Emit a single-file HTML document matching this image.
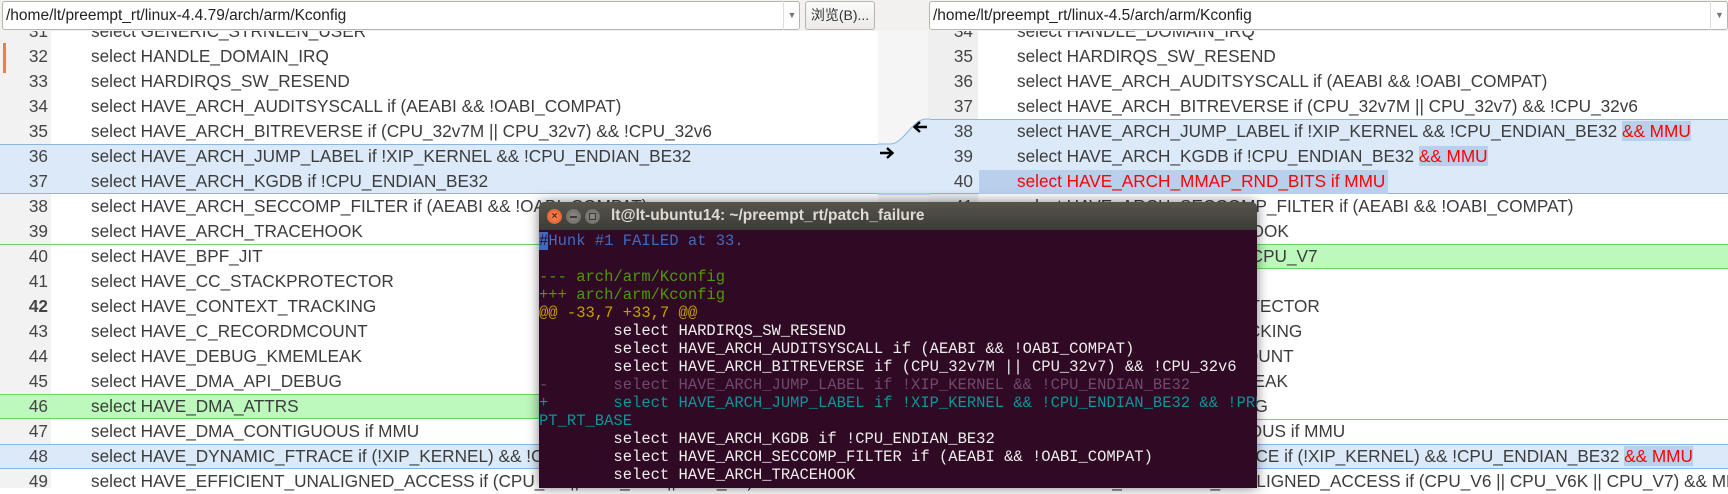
<!DOCTYPE html>
<html><head><meta charset="utf-8"><style>
*{margin:0;padding:0;box-sizing:border-box}
body{width:1728px;height:488px;overflow:hidden;background:#fff;position:relative;font-family:"Liberation Sans","Noto Sans CJK SC",sans-serif;}
.abs{position:absolute}
.row{position:absolute;height:25px;line-height:25px;font-size:17.2px;color:#3c3c3c;white-space:pre}
.num{position:absolute;height:25px;line-height:25px;font-size:17.2px;color:#444;text-align:right;width:40px}
.red{color:#f00}
.hl{background:#b9d0ec}
.term{position:absolute;left:539px;top:202px;width:718px;height:286px;background:#300a24;border-radius:6px 6px 0 0;overflow:hidden;box-shadow:0 0 12px rgba(0,0,0,.5)}
.tb{height:28px;background:linear-gradient(#56544d,#3c3b37);position:relative}
.tl{position:absolute;left:0;width:718px;height:18px;line-height:18px;font-family:"Liberation Mono",monospace;font-size:15.5px;white-space:pre;color:#eeeeec}
</style></head><body>
<div class="abs" style="left:0;top:0;width:51px;height:488px;background:#f2f2f2"></div>
<div class="abs" style="left:878px;top:0;width:50px;height:488px;background:#f5f5f5"></div>
<div class="abs" style="left:928px;top:0;width:50px;height:488px;background:#efefef"></div>
<div class="abs" style="left:3px;top:43px;width:3px;height:30px;background:#f08040"></div>
<div class="abs" style="left:0;top:144px;width:878px;height:50px;background:#dbe9f9;border-top:1px solid #8ab6e6;border-bottom:1px solid #8ab6e6"></div>
<div class="abs" style="left:0;top:244px;width:878px;height:1px;background:#6cd46c"></div>
<div class="abs" style="left:0;top:394px;width:878px;height:25px;background:#bdf8bd;border-top:1px solid #6cd46c;border-bottom:1px solid #6cd46c"></div>
<div class="abs" style="left:0;top:444px;width:878px;height:25px;background:#dbe9f9;border-top:1px solid #8ab6e6;border-bottom:1px solid #8ab6e6"></div>
<div class="abs" style="left:928px;top:119px;width:800px;height:75px;background:#dbe9f9;border-top:1px solid #8ab6e6;border-bottom:1px solid #8ab6e6"></div>
<svg class="abs" style="left:878px;top:118px" width="52" height="77"><path d="M0 26 L12 26 C26 26 34 1 48 1 L52 1 L52 76 L0 76 Z" fill="#dbe9f9"/><path d="M0 26 L12 26 C26 26 34 1 48 1 L52 1" stroke="#8ab6e6" fill="none"/><path d="M0 76 L52 76" stroke="#8ab6e6"/></svg>
<div class="abs" style="left:979px;top:170px;width:409px;height:24px;background:#b9d0ec"></div>
<div class="abs" style="left:928px;top:244px;width:800px;height:25px;background:#bdf8bd;border-top:1px solid #6cd46c;border-bottom:1px solid #6cd46c"></div>
<div class="abs" style="left:928px;top:419px;width:800px;height:1px;background:#6cd46c"></div>
<div class="abs" style="left:928px;top:444px;width:800px;height:25px;background:#dbe9f9;border-top:1px solid #8ab6e6;border-bottom:1px solid #8ab6e6"></div>
<svg class="abs" style="left:912px;top:120px" width="16" height="14"><path d="M15 7 H3 M8 2 L2.5 7 L8 12" stroke="#000" stroke-width="2.4" fill="none"/></svg>
<svg class="abs" style="left:879px;top:146px" width="16" height="14"><path d="M1 7 H13 M8 2 L13.5 7 L8 12" stroke="#000" stroke-width="2.4" fill="none"/></svg>

<div class="num" style="left:8px;top:19px">31</div><div class="row" style="left:91px;top:19px">select GENERIC_STRNLEN_USER</div>
<div class="num" style="left:8px;top:44px">32</div><div class="row" style="left:91px;top:44px">select HANDLE_DOMAIN_IRQ</div>
<div class="num" style="left:8px;top:69px">33</div><div class="row" style="left:91px;top:69px">select HARDIRQS_SW_RESEND</div>
<div class="num" style="left:8px;top:94px">34</div><div class="row" style="left:91px;top:94px">select HAVE_ARCH_AUDITSYSCALL if (AEABI &amp;&amp; !OABI_COMPAT)</div>
<div class="num" style="left:8px;top:119px">35</div><div class="row" style="left:91px;top:119px">select HAVE_ARCH_BITREVERSE if (CPU_32v7M || CPU_32v7) &amp;&amp; !CPU_32v6</div>
<div class="num" style="left:8px;top:144px">36</div><div class="row" style="left:91px;top:144px">select HAVE_ARCH_JUMP_LABEL if !XIP_KERNEL &amp;&amp; !CPU_ENDIAN_BE32</div>
<div class="num" style="left:8px;top:169px">37</div><div class="row" style="left:91px;top:169px">select HAVE_ARCH_KGDB if !CPU_ENDIAN_BE32</div>
<div class="num" style="left:8px;top:194px">38</div><div class="row" style="left:91px;top:194px">select HAVE_ARCH_SECCOMP_FILTER if (AEABI &amp;&amp; !OABI_COMPAT)</div>
<div class="num" style="left:8px;top:219px">39</div><div class="row" style="left:91px;top:219px">select HAVE_ARCH_TRACEHOOK</div>
<div class="num" style="left:8px;top:244px">40</div><div class="row" style="left:91px;top:244px">select HAVE_BPF_JIT</div>
<div class="num" style="left:8px;top:269px">41</div><div class="row" style="left:91px;top:269px">select HAVE_CC_STACKPROTECTOR</div>
<div class="num" style="left:8px;top:294px;font-weight:bold">42</div><div class="row" style="left:91px;top:294px">select HAVE_CONTEXT_TRACKING</div>
<div class="num" style="left:8px;top:319px">43</div><div class="row" style="left:91px;top:319px">select HAVE_C_RECORDMCOUNT</div>
<div class="num" style="left:8px;top:344px">44</div><div class="row" style="left:91px;top:344px">select HAVE_DEBUG_KMEMLEAK</div>
<div class="num" style="left:8px;top:369px">45</div><div class="row" style="left:91px;top:369px">select HAVE_DMA_API_DEBUG</div>
<div class="num" style="left:8px;top:394px">46</div><div class="row" style="left:91px;top:394px">select HAVE_DMA_ATTRS</div>
<div class="num" style="left:8px;top:419px">47</div><div class="row" style="left:91px;top:419px">select HAVE_DMA_CONTIGUOUS if MMU</div>
<div class="num" style="left:8px;top:444px">48</div><div class="row" style="left:91px;top:444px">select HAVE_DYNAMIC_FTRACE if (!XIP_KERNEL) &amp;&amp; !CPU_ENDIAN_BE32</div>
<div class="num" style="left:8px;top:469px">49</div><div class="row" style="left:91px;top:469px">select HAVE_EFFICIENT_UNALIGNED_ACCESS if (CPU_V6 || CPU_V6K || CPU_V7) &amp;&amp; MMU</div>

<div class="num" style="left:933px;top:19px">34</div><div class="row" style="left:1017px;top:19px">select HANDLE_DOMAIN_IRQ</div>
<div class="num" style="left:933px;top:44px">35</div><div class="row" style="left:1017px;top:44px">select HARDIRQS_SW_RESEND</div>
<div class="num" style="left:933px;top:69px">36</div><div class="row" style="left:1017px;top:69px">select HAVE_ARCH_AUDITSYSCALL if (AEABI &amp;&amp; !OABI_COMPAT)</div>
<div class="num" style="left:933px;top:94px">37</div><div class="row" style="left:1017px;top:94px">select HAVE_ARCH_BITREVERSE if (CPU_32v7M || CPU_32v7) &amp;&amp; !CPU_32v6</div>
<div class="num" style="left:933px;top:119px">38</div><div class="row" style="left:1017px;top:119px">select HAVE_ARCH_JUMP_LABEL if !XIP_KERNEL &amp;&amp; !CPU_ENDIAN_BE32 <span class="red hl">&amp;&amp; MMU</span></div>
<div class="num" style="left:933px;top:144px">39</div><div class="row" style="left:1017px;top:144px">select HAVE_ARCH_KGDB if !CPU_ENDIAN_BE32 <span class="red hl">&amp;&amp; MMU</span></div>
<div class="num" style="left:933px;top:169px">40</div><div class="row red" style="left:1017px;top:169px">select HAVE_ARCH_MMAP_RND_BITS if MMU</div>
<div class="num" style="left:933px;top:194px">41</div><div class="row" style="left:1017px;top:194px">select HAVE_ARCH_SECCOMP_FILTER if (AEABI &amp;&amp; !OABI_COMPAT)</div>
<div class="num" style="left:933px;top:219px">42</div><div class="row" style="left:1017px;top:219px">select HAVE_ARCH_TRACEHOOK</div>
<div class="num" style="left:933px;top:244px">43</div><div class="row" style="left:1017px;top:244px">select HAVE_ARM_SMCCC if CPU_V7</div>
<div class="num" style="left:933px;top:269px">44</div><div class="row" style="left:1017px;top:269px">select HAVE_BPF_JIT</div>
<div class="num" style="left:933px;top:294px">45</div><div class="row" style="left:1017px;top:294px">select HAVE_CC_STACKPROTECTOR</div>
<div class="num" style="left:933px;top:319px">46</div><div class="row" style="left:1017px;top:319px">select HAVE_CONTEXT_TRACKING</div>
<div class="num" style="left:933px;top:344px">47</div><div class="row" style="left:1017px;top:344px">select HAVE_C_RECORDMCOUNT</div>
<div class="num" style="left:933px;top:369px">48</div><div class="row" style="left:1017px;top:369px">select HAVE_DEBUG_KMEMLEAK</div>
<div class="num" style="left:933px;top:394px">49</div><div class="row" style="left:1017px;top:394px">select HAVE_DMA_API_DEBUG</div>
<div class="num" style="left:933px;top:419px">50</div><div class="row" style="left:1017px;top:419px">select HAVE_DMA_CONTIGUOUS if MMU</div>
<div class="num" style="left:933px;top:444px">51</div><div class="row" style="left:1017px;top:444px">select HAVE_DYNAMIC_FTRACE if (!XIP_KERNEL) &amp;&amp; !CPU_ENDIAN_BE32 <span class="red hl">&amp;&amp; MMU</span></div>
<div class="num" style="left:933px;top:469px">52</div><div class="row" style="left:1017px;top:469px">select HAVE_EFFICIENT_UNALIGNED_ACCESS if (CPU_V6 || CPU_V6K || CPU_V7) &amp;&amp; MMU</div>

<div class="abs" style="left:0;top:0;width:878px;height:31px;background:#f2f1f0"></div>
<div class="abs" style="left:2px;top:1px;width:798px;height:29px;background:#fff;border:1px solid #b8b5b0;border-radius:3px;font-size:15.5px;line-height:27px;padding-left:3px;color:#222">/home/lt/preempt_rt/linux-4.4.79/arch/arm/Kconfig</div>
<div class="abs" style="left:783px;top:1px;width:17px;height:29px;border-left:1px solid #ddd;font-size:9px;line-height:29px;color:#777;text-align:center">&#x25BC;</div>
<div class="abs" style="left:805px;top:1px;width:70px;height:29px;background:linear-gradient(#fafafa,#ebeae8);border:1px solid #b8b5b0;border-radius:3px;font-size:14px;line-height:27px;text-align:center;color:#333">浏览(B)...</div>
<div class="abs" style="left:878px;top:0;width:850px;height:31px;background:#f2f1f0"></div>
<div class="abs" style="left:929px;top:1px;width:799px;height:29px;background:#fff;border:1px solid #b8b5b0;border-radius:3px;font-size:15.5px;line-height:27px;padding-left:3px;color:#222">/home/lt/preempt_rt/linux-4.5/arch/arm/Kconfig</div>
<div class="abs" style="left:1710px;top:1px;width:18px;height:29px;border-left:1px solid #ddd;font-size:9px;line-height:29px;color:#777;text-align:center">&#x25BC;</div>

<div class="term">
<div class="tb">
<div class="abs" style="left:8px;top:7px;width:15px;height:15px;border-radius:50%;background:radial-gradient(#f58a5e,#e0531c);color:#5a2010;font-size:10px;line-height:15px;text-align:center;font-weight:bold">×</div>
<div class="abs" style="left:27px;top:7px;width:15px;height:15px;border-radius:50%;background:radial-gradient(#8e8c86,#66645e)"><div style="margin:7px 4px 0;height:1.5px;background:#3c3b37"></div></div>
<div class="abs" style="left:46px;top:7px;width:15px;height:15px;border-radius:50%;background:radial-gradient(#8e8c86,#66645e)"><div style="margin:4px;height:7px;border:1.5px solid #3c3b37"></div></div>
<div class="abs" style="left:72px;top:0;line-height:28px;font-size:15.5px;font-weight:bold;color:#dfdbd2">lt@lt-ubuntu14: ~/preempt_rt/patch_failure</div>
</div>
<div class="tl" style="top:30px;color:#3f6ac2"><span style="background:#3f6ac2;color:#300a24">#</span>Hunk #1 FAILED at 33.</div>
<div class="tl" style="top:66px;color:#4e9a06">--- arch/arm/Kconfig</div>
<div class="tl" style="top:84px;color:#4e9a06">+++ arch/arm/Kconfig</div>
<div class="tl" style="top:102px;color:#c4a000">@@ -33,7 +33,7 @@</div>
<div class="tl" style="top:120px">        select HARDIRQS_SW_RESEND</div>
<div class="tl" style="top:138px">        select HAVE_ARCH_AUDITSYSCALL if (AEABI &amp;&amp; !OABI_COMPAT)</div>
<div class="tl" style="top:156px">        select HAVE_ARCH_BITREVERSE if (CPU_32v7M || CPU_32v7) &amp;&amp; !CPU_32v6</div>
<div class="tl" style="top:174px;color:#6e4a6c">-       select HAVE_ARCH_JUMP_LABEL if !XIP_KERNEL &amp;&amp; !CPU_ENDIAN_BE32</div>
<div class="tl" style="top:192px;color:#06989a">+       select HAVE_ARCH_JUMP_LABEL if !XIP_KERNEL &amp;&amp; !CPU_ENDIAN_BE32 &amp;&amp; !PREEM</div>
<div class="tl" style="top:210px;color:#06989a">PT_RT_BASE</div>
<div class="tl" style="top:228px">        select HAVE_ARCH_KGDB if !CPU_ENDIAN_BE32</div>
<div class="tl" style="top:246px">        select HAVE_ARCH_SECCOMP_FILTER if (AEABI &amp;&amp; !OABI_COMPAT)</div>
<div class="tl" style="top:264px">        select HAVE_ARCH_TRACEHOOK</div>
</div>
</body></html>
